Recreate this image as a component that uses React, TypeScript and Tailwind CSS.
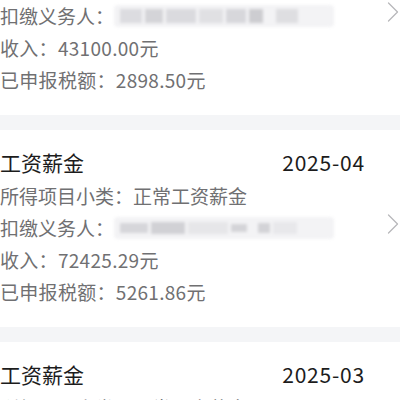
import React from 'react';

type Record = {
  month: string;
  income: string;
  tax: string;
};

const records: Record[] = [
  { month: '2025-05', income: '43100.00', tax: '2898.50' },
  { month: '2025-04', income: '72425.29', tax: '5261.86' },
  { month: '2025-03', income: '72425.29', tax: '5261.86' },
];

const font = { fontFamily: '"Noto Sans CJK SC", "Noto Sans", sans-serif' };

// blurred-out payer name
const Blurred: React.FC<{ variant: number }> = ({ variant }) => (
  <div className="relative h-[22px] w-[220px] overflow-hidden rounded-sm bg-[#f3f3f5] blur-[1.5px]">
    {variant === 0 ? (
      <div className="flex h-full items-center gap-[3px] px-[6px]">
        <div className="h-[14px] w-[22px] bg-[#dcdce0]" />
        <div className="h-[14px] w-[18px] bg-[#d4d4d8]" />
        <div className="h-[14px] w-[30px] bg-[#dadade]" />
        <div className="h-[14px] w-[24px] bg-[#e0e0e3]" />
        <div className="h-[14px] w-[20px] bg-[#d7d7db]" />
        <div className="h-[14px] w-[14px] bg-[#cdcdd1]" />
        <div className="ml-[10px] h-[14px] w-[22px] bg-[#dedee1]" />
      </div>
    ) : (
      <div className="flex h-full items-center gap-[3px] px-[6px]">
        <div className="h-[10px] w-[28px] bg-[#d6d6da]" />
        <div className="h-[12px] w-[34px] bg-[#d1d1d5]" />
        <div className="h-[12px] w-[40px] bg-[#e6e6e9]" />
        <div className="h-[8px] w-[16px] bg-[#d4d4d8]" />
        <div className="ml-[8px] h-[10px] w-[12px] bg-[#d3d3d7]" />
        <div className="h-[12px] w-[24px] bg-[#e8e8eb]" />
      </div>
    )}
  </div>
);

const Chevron = () => (
  <svg width="12" height="20" viewBox="0 0 12 20" fill="none" className="shrink-0">
    <path d="M1.5 1 L10.5 10 L1.5 19" stroke="#b8b8bb" strokeWidth="1.3" strokeLinecap="round" strokeLinejoin="round" />
  </svg>
);

const Card: React.FC<{ r: Record; idx: number }> = ({ r, idx }) => (
  <div className="bg-white pt-[16px] pb-[19px]">
    <div className="flex h-[34px] items-center justify-between pr-[35px] text-[21px] text-[#1c1c1c]">
      <span>工资薪金</span>
      <span className="tracking-[0.8px]">{r.month}</span>
    </div>
    <div className="text-[19px] text-[#707072]">
      <div className="flex h-[32px] items-center">所得项目小类：正常工资薪金</div>
      <div className="flex h-[32px] items-center">
        <span>扣缴义务人：</span>
        <Blurred variant={idx} />
        <div className="ml-auto -mt-[8px] pr-[1px]">
          <Chevron />
        </div>
      </div>
      <div className="flex h-[32px] items-center tracking-[0.3px]">收入：{r.income}元</div>
      <div className="flex h-[32px] items-center tracking-[0.3px]">已申报税额：{r.tax}元</div>
    </div>
  </div>
);

export default function App() {
  return (
    <div className="h-[400px] w-[400px] overflow-hidden bg-[#f4f5f7]" style={font}>
      <div className="-mt-[82px] flex flex-col gap-[15px]">
        {records.map((r, i) => (
          <Card key={r.month} r={r} idx={i === 1 ? 1 : 0} />
        ))}
      </div>
    </div>
  );
}
